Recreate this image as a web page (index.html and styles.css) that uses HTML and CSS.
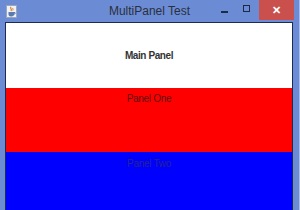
FILE: index.html
```html
<!DOCTYPE html>
<html>
<head>
  <meta charset="utf-8" />
  <title>MultiPanel Test</title>
  <link rel="stylesheet" href="styles.css">
</head>
<body>
  <div class="window">
    <div class="titlebar">
      <svg class="app-icon" width="11" height="13" viewBox="0 0 11 13">
        <rect x="0.5" y="0.5" width="10" height="12" fill="#eef1f6" stroke="#9aa6bb" />
        <path d="M5 2 C3.5 3.5 6.5 4 5 6" stroke="#e07a1f" stroke-width="1.2" fill="none" />
        <path d="M7 3 C6.2 4 7.6 4.5 6.8 5.5" stroke="#e07a1f" stroke-width="1" fill="none" />
        <path d="M2.5 7 h5.5 v2.5 a2.5 2 0 0 1 -2.5 2 h-0.5 a2.5 2 0 0 1 -2.5 -2 z" fill="#5a7bb0" />
        <path d="M8 7.5 h1 v1.5 h-1" stroke="#5a7bb0" fill="none" />
      </svg>
      <div class="title">MultiPanel Test</div>
      <div class="controls">
        <span class="btn min"><i></i></span>
        <span class="btn max"><i></i></span>
        <span class="btn close">&#x2715;</span>
      </div>
    </div>
    <div class="client">
      <div class="panel main"><b>Main Panel</b></div>
      <div class="panel one">Panel One</div>
      <div class="panel two">Panel Two</div>
    </div>
  </div>
</body>
</html>
```

FILE: styles.css
```css
body {
  margin: 0;
  font-family: "Liberation Sans", Arial, sans-serif;
}
.window {
  width: 300px;
  height: 210px;
  background: #6b8cd4;
  display: flex;
  flex-direction: column;
  box-sizing: border-box;
  border-right: 1px solid #a9bde8;
}
.titlebar {
  height: 22px;
  display: flex;
  align-items: center;
  position: relative;
}
.app-icon {
  margin-left: 6px;
  margin-top: 1px;
}
.title {
  position: absolute;
  left: 0;
  right: 0;
  top: 4px;
  text-align: center;
  font-size: 12px;
  color: #2a2f3d;
}
.controls {
  margin-left: auto;
  margin-right: 5px;
  display: flex;
  align-self: flex-start;
}
.btn {
  width: 22px;
  height: 20px;
  display: flex;
  align-items: center;
  justify-content: center;
}
.min i {
  width: 7px;
  height: 2px;
  background: #1e2a44;
  margin-top: 4px;
}
.max i {
  width: 5px;
  height: 5px;
  border: 1px solid #1e2a44;
  margin-top: -4px;
}
.close {
  width: 35px;
  margin-left: 2px;
  background: #c9504d;
  color: #fff;
  font-size: 11px;
  font-weight: bold;
}
.client {
  flex: 1;
  margin: 0 6px 0 5px;
  border: 1px solid #1d2b52;
  border-bottom: none;
  display: flex;
  flex-direction: column;
}
.panel {
  text-align: center;
  font-size: 10px;
  line-height: 13px;
  letter-spacing: -0.3px;
}
.main {
  background: #fff;
  height: 65px;
  display: flex;
  align-items: center;
  justify-content: center;
  color: #333;
  letter-spacing: -0.4px;
}
.one {
  background: #ff0000;
  height: 60px;
  padding-top: 4px;
  color: #5e1212;
}
.two {
  background: #0000ff;
  flex: 1;
  padding-top: 5px;
  color: #24248e;
}
```
